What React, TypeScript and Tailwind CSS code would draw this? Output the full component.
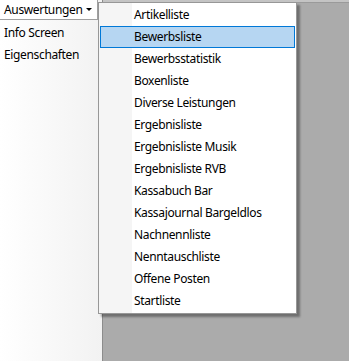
const items = [
  "Artikelliste",
  "Bewerbsliste",
  "Bewerbsstatistik",
  "Boxenliste",
  "Diverse Leistungen",
  "Ergebnisliste",
  "Ergebnisliste Musik",
  "Ergebnisliste RVB",
  "Kassabuch Bar",
  "Kassajournal Bargeldlos",
  "Nachnennliste",
  "Nenntauschliste",
  "Offene Posten",
  "Startliste",
];

export default function App() {
  const selected = 1;
  return (
    <div
      className="relative flex h-[361px] w-[349px] overflow-hidden text-[12px] tracking-[-0.35px] text-black"
      style={{ fontFamily: '"Noto Sans", "Open Sans", sans-serif' }}
    >
      {/* left side panel */}
      <div className="flex w-[103px] flex-col border-r border-[#8c8c8c] bg-gradient-to-r from-[#ffffff] to-[#f2f2f2]">
        <div className="flex h-[20px] w-[98px] items-center justify-between border-r border-b border-[#a0a0a0] bg-white pl-[4px] pr-[5px]">
          <span>Auswertungen</span>
          <span className="h-0 w-0 border-x-[3px] border-t-[3px] border-x-transparent border-t-black" />
        </div>
        <div className="flex flex-col pt-[2px] pl-[4px]">
          <div className="flex h-[22px] items-center">Info Screen</div>
          <div className="flex h-[22px] items-center">Eigenschaften</div>
        </div>
      </div>

      {/* workspace */}
      <div className="flex flex-1 flex-col bg-[#ababab]">
        <div className="h-[3px] border-b border-[#9a9a9a] bg-[#c4c4c4]" />
      </div>

      {/* dropdown menu */}
      <div className="absolute left-[98px] top-[2px] w-[199px] border border-[#979797] bg-white p-[1px] shadow-[3px_3px_2px_rgba(0,0,0,0.35)]">
        <div className="absolute bottom-0 left-0 top-0 w-[33px] bg-[#f5f5f5]" />
        <div className="relative flex flex-col">
          {items.map((item, i) => (
            <div
              key={item}
              className={
                i === selected
                  ? "flex h-[22px] items-center border border-[#0078d7] bg-[#b6d6f2] pl-[33px]"
                  : "flex h-[22px] items-center border border-transparent pl-[33px]"
              }
            >
              {item}
            </div>
          ))}
        </div>
      </div>
    </div>
  );
}
